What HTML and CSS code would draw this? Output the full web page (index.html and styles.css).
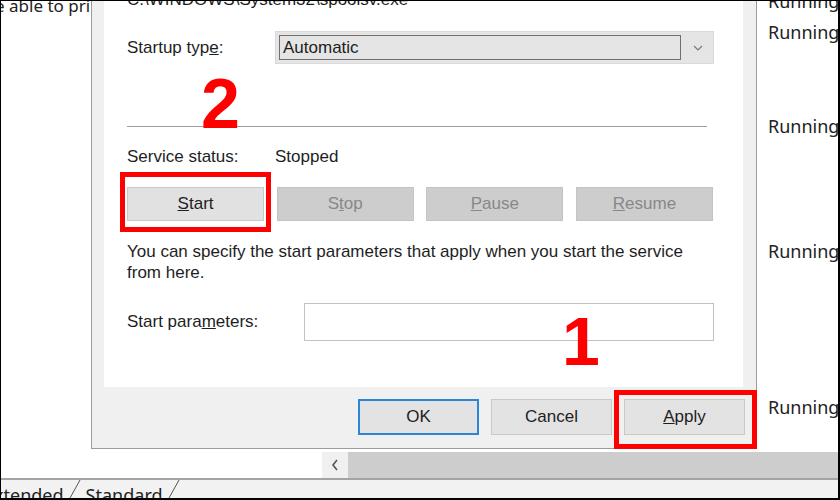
FILE: index.html
```html
<!DOCTYPE html>
<html lang="en">
<head>
  <meta charset="UTF-8" />
  <meta name="viewport" content="width=device-width, initial-scale=1.0"/>
  <title>Print Spooler Properties</title>
  <link rel="stylesheet" href="styles.css">
</head>
<body>
  <div class="screen">
    <div class="desk">
      <div class="behind">e able to pri</div>

      <div class="dialog">
        <div class="panel">
          <div class="path">C:\WINDOWS\System32\spoolsv.exe</div>

          <div class="field startup">
            <span class="label">Startup typ<u>e</u>:</span>
            <div class="combo">
              <div class="combo-value">Automatic</div>
              <svg class="chevron" width="10" height="6" viewBox="0 0 10 6"><polyline points="1,1 5,5 9,1" fill="none" stroke="#7a7a7a" stroke-width="1.2"/></svg>
            </div>
          </div>

          <hr class="sep">

          <div class="field status">
            <span class="label">Service status:</span>
            <span>Stopped</span>
          </div>

          <div class="svc-buttons">
            <button class="btn"><u>S</u>tart</button>
            <button class="btn" disabled>S<u>t</u>op</button>
            <button class="btn" disabled><u>P</u>ause</button>
            <button class="btn" disabled><u>R</u>esume</button>
          </div>

          <p class="hint">You can specify the start parameters that apply when you start the service<br>from here.</p>

          <div class="field params">
            <span class="label">Start para<u>m</u>eters:</span>
            <input class="param-input" type="text">
          </div>

          <!-- step markers -->
          <span class="mark mark-2">2</span>
          <span class="mark mark-1">1</span>
          <span class="callout callout-start"></span>
        </div>

        <div class="footer">
          <button class="btn btn-wide btn-default">OK</button>
          <button class="btn btn-wide">Cancel</button>
          <button class="btn btn-wide"><u>A</u>pply</button>
        </div>
        <span class="callout callout-apply"></span>
      </div>

      <ul class="status-col">
        <li>Running</li>
        <li>Running</li>
        <li></li>
        <li></li>
        <li>Running</li>
        <li></li>
        <li></li>
        <li></li>
        <li>Running</li>
        <li></li>
        <li></li>
        <li></li>
        <li></li>
        <li>Running</li>
        <li></li>
      </ul>
    </div>

    <div class="hscroll">
      <span class="hs-space"></span>
      <span class="hs-btn">
        <svg width="8" height="12" viewBox="0 0 8 12"><polyline points="6,1 2,6 6,11" fill="none" stroke="#555" stroke-width="1.6"/></svg>
      </span>
      <span class="hs-thumb"></span>
    </div>

    <div class="tabs">
      <span class="tab tab-first">Extended</span>
      <svg class="tab-edge" width="14" height="18" viewBox="0 0 14 18"><line x1="2" y1="18" x2="12" y2="0" stroke="#555" stroke-width="1"/></svg>
      <span class="tab">Standard</span>
      <svg class="tab-edge" width="14" height="18" viewBox="0 0 14 18"><line x1="2" y1="18" x2="12" y2="0" stroke="#555" stroke-width="1"/></svg>
    </div>
  </div>
</body>
</html>
```

FILE: styles.css
```css
body {
  margin: 0;
  background: #fff;
}
.screen {
  width: 840px;
  height: 500px;
  box-sizing: border-box;
  border: solid #000;
  border-width: 1px 2px 2px 1px;
  overflow: hidden;
  background: #fff;
  display: flex;
  flex-direction: column;
  font-family: "Noto Sans", sans-serif;
  color: #222;
}
.desk {
  display: grid;
  grid-template-columns: 90px 666px 1fr;
  height: 451px;
  flex: none;
}
.behind {
  overflow: hidden;
  white-space: nowrap;
  font-size: 17px;
  line-height: 18px;
  margin-top: -4px;
  text-indent: -6px;
}

/* dialog */
.dialog {
  position: relative;
  align-self: start;
  height: 448px;
  box-sizing: border-box;
  background: #f0f0f0;
  border: 1px solid #9c9c9c;
  border-top: 0;
  display: flex;
  flex-direction: column;
  font-family: "Liberation Sans", Arial, sans-serif;
  font-size: 17px;
  color: #1e1e1e;
}
.panel {
  position: relative;
  flex: none;
  height: 386px;
  box-sizing: border-box;
  margin: 0 13px 0 12px;
  padding: 0 29px 0 23px;
  background: #fff;
}
.path {
  margin-top: -11px;
  line-height: 20px;
  white-space: nowrap;
}
.field {
  display: flex;
  align-items: center;
}
.label {
  flex: none;
  width: 148px;
}
.startup {
  margin-top: 21px;
}
.combo {
  flex: none;
  width: 439px;
  height: 33px;
  box-sizing: border-box;
  padding: 3px;
  background: #e5e5e5;
  border: 1px solid #d9d9d9;
  display: flex;
  align-items: center;
}
.combo-value {
  width: 402px;
  height: 25px;
  box-sizing: border-box;
  padding-left: 3px;
  line-height: 23px;
  border: 1px solid #707070;
}
.chevron {
  margin-left: 12px;
}
.sep {
  margin: 62px 7px 0 0;
  border: 0;
  border-top: 1px solid #a0a0a0;
  height: 0;
}
.status {
  margin-top: 20px;
  line-height: 20px;
}
.svc-buttons {
  margin-top: 20px;
  width: 586px;
  display: grid;
  grid-template-columns: repeat(4, 1fr);
  gap: 12.5px;
}
.btn {
  font-family: "Liberation Sans", Arial, sans-serif;
  font-size: 17px;
  height: 34px;
  padding: 0;
  background: #e1e1e1;
  border: 1px solid #c9c9c9;
  color: #1e1e1e;
}
.btn:disabled {
  background: #cdcdcd;
  border-color: #c4c4c4;
  color: #888;
}
.hint {
  margin: 20px 0 0;
  line-height: 21px;
  white-space: nowrap;
}
.params {
  margin-top: 20px;
}
.params .label {
  width: 177px;
}
.param-input {
  width: 410px;
  height: 38px;
  box-sizing: border-box;
  margin: 0;
  border: 1px solid #c2c2c2;
  background: #fff;
}
.footer {
  flex: 1;
  display: flex;
  justify-content: flex-end;
  gap: 12px;
  padding: 12px 11px 0;
}
.btn-wide {
  width: 121px;
  height: 36px;
  background: #e3e3e3;
}
.btn-default {
  border: 2px solid #2b86d6;
}

/* red step markers */
.mark {
  position: absolute;
  font-family: "Liberation Sans", Arial, sans-serif;
  font-weight: bold;
  color: #f00;
  line-height: 1;
}
.mark-2 {
  left: 97px;
  top: 68px;
  font-size: 70px;
}
.mark-1 {
  left: 458px;
  top: 306px;
  font-size: 68px;
}
.callout {
  position: absolute;
  box-sizing: border-box;
  border: 5px solid #f00;
}
.callout-start {
  left: 16px;
  top: 171px;
  width: 151px;
  height: 60px;
}
.callout-apply {
  left: 522px;
  top: 389px;
  width: 143px;
  height: 59px;
}

/* services list, status column */
.status-col {
  list-style: none;
  margin: -14.8px 0 0;
  padding: 0 0 0 11px;
  overflow: hidden;
  white-space: nowrap;
  font-size: 18px;
}
.status-col li {
  height: 31.2px;
  line-height: 31.2px;
}

/* horizontal scrollbar */
.hscroll {
  flex: none;
  height: 26px;
  display: flex;
}
.hs-space {
  width: 321px;
}
.hs-btn {
  width: 26px;
  background: #f0f0f0;
  display: flex;
  align-items: center;
  justify-content: center;
}
.hs-thumb {
  flex: 1;
  background: #cdcdcd;
}

/* sheet tabs */
.tabs {
  flex: 1;
  border-top: 2px solid #a3a3a3;
  background: #f2f2f2;
  display: flex;
  align-items: flex-start;
  white-space: nowrap;
  font-size: 18px;
  line-height: 18px;
}
.tab {
  padding: 6px 4px 0;
}
.tab-first {
  margin-left: -21px;
}
.tab-edge {
  flex: none;
}
```
